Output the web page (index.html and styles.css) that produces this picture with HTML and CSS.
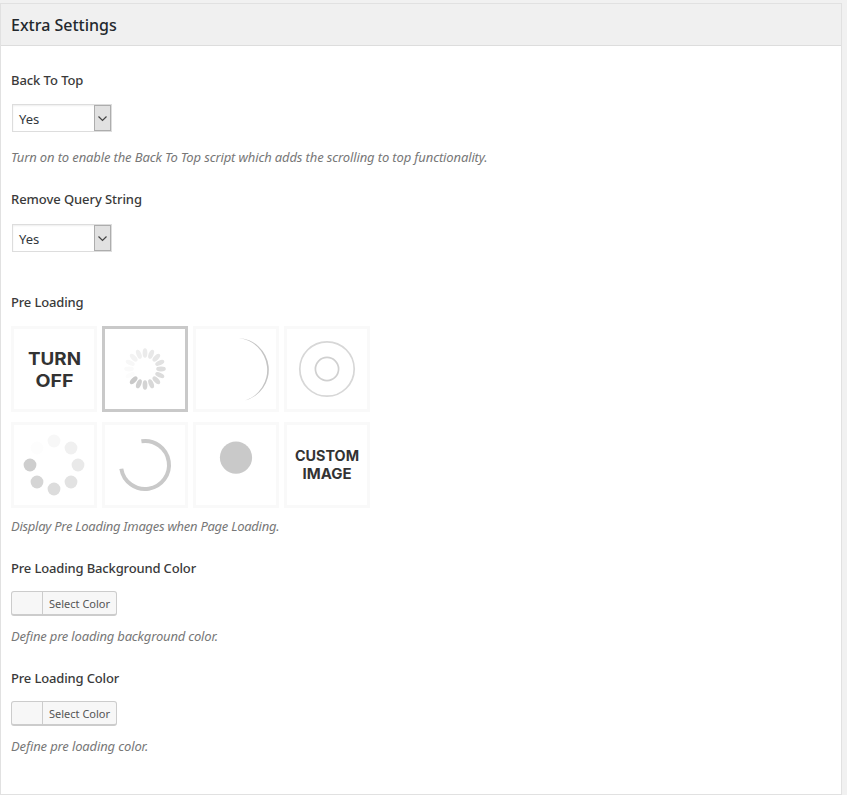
FILE: index.html
```
<!DOCTYPE html>
<html lang="en">
<head>
<meta charset="utf-8">
<title>Extra Settings</title>
<link rel="stylesheet" href="styles.css">
</head>
<body>
<section class="panel">
  <h2 class="panel-title"><span>Extra Settings</span></h2>
  <div class="panel-body">
    <div class="field back-top">
      <div class="label"><span>Back To Top</span></div>
      <div class="select"><span>Yes</span><i><svg width="15" height="25" viewBox="0 0 15 25"><path d="M3.5 10.5l4 4 4-4"/></svg></i></div>
      <p class="desc d1"><span>Turn on to enable the Back To Top script which adds the scrolling to top functionality.</span></p>
    </div>
    <div class="field query">
      <div class="label l2"><span>Remove Query String</span></div>
      <div class="select"><span>Yes</span><i><svg width="15" height="25" viewBox="0 0 15 25"><path d="M3.5 10.5l4 4 4-4"/></svg></i></div>
    </div>
    <div class="field loading">
      <div class="label l3"><span>Pre Loading</span></div>
      <div class="tiles">
        <div class="tile"><svg viewBox="0 0 80 80"><g class="caption big"><text x="14" y="35.7" textLength="53" lengthAdjust="spacingAndGlyphs">TURN</text><text x="21.5" y="57.7" textLength="38" lengthAdjust="spacingAndGlyphs">OFF</text></g></svg></div>
        <div class="tile selected"><svg viewBox="0 0 80 80">
          <defs><ellipse id="petal" cx="40" cy="24" rx="2.4" ry="4.8"/></defs>
          <g>
            <use href="#petal" fill="#ebebeb"/>
            <use href="#petal" fill="#e8e8e8" transform="rotate(22.5 40 40)"/>
            <use href="#petal" fill="#e6e6e6" transform="rotate(45 40 40)"/>
            <use href="#petal" fill="#e2e2e2" transform="rotate(67.5 40 40)"/>
            <use href="#petal" fill="#dedede" transform="rotate(90 40 40)"/>
            <use href="#petal" fill="#dcdcdc" transform="rotate(112.5 40 40)"/>
            <use href="#petal" fill="#dadada" transform="rotate(135 40 40)"/>
            <use href="#petal" fill="#d8d8d8" transform="rotate(157.5 40 40)"/>
            <use href="#petal" fill="#d4d4d4" transform="rotate(180 40 40)"/>
            <use href="#petal" fill="#d0d0d0" transform="rotate(202.5 40 40)"/>
            <use href="#petal" fill="#c9c9c9" transform="rotate(225 40 40)"/>
            <use href="#petal" fill="#fcfcfc" transform="rotate(247.5 40 40)"/>
            <use href="#petal" fill="#fafafa" transform="rotate(270 40 40)"/>
            <use href="#petal" fill="#f7f7f7" transform="rotate(292.5 40 40)"/>
            <use href="#petal" fill="#f3f3f3" transform="rotate(315 40 40)"/>
            <use href="#petal" fill="#efefef" transform="rotate(337.5 40 40)"/>
          </g></svg></div>
        <div class="tile"><svg viewBox="0 0 80 80"><path fill="#c4c4c4" d="M42 9A31.76 31.76 0 0 1 49 71.5A32.1 32.1 0 0 0 42 9Z"/></svg></div>
        <div class="tile"><svg viewBox="0 0 80 80" fill="none" stroke-width="1.7"><circle cx="40" cy="40" r="27.2" stroke="#d7d7d7"/><circle cx="40" cy="40" r="11.6" stroke="#d0d0d0"/></svg></div>
        <div class="tile"><svg viewBox="0 0 80 80">
          <circle cx="40" cy="16" r="6.4" fill="#f7f7f7"/><circle cx="57" cy="23" r="6.4" fill="#f0f0f0"/><circle cx="64" cy="40" r="6.4" fill="#e9e9e9"/><circle cx="57" cy="57" r="6.4" fill="#e2e2e2"/><circle cx="40" cy="64" r="6.4" fill="#dcdcdc"/><circle cx="23" cy="57" r="6.4" fill="#d5d5d5"/><circle cx="16" cy="40" r="6.4" fill="#cecece"/><circle cx="23" cy="23" r="6.4" fill="#fdfdfd"/></svg></div>
        <div class="tile"><svg viewBox="0 0 80 80"><path fill="none" stroke="#c9c9c9" stroke-width="4" d="M36.4 16.3A24 24 0 1 1 16.3 43.8"/></svg></div>
        <div class="tile"><svg viewBox="0 0 80 80"><circle cx="40" cy="32.6" r="16.1" fill="#c9c9c9"/></svg></div>
        <div class="tile"><svg viewBox="0 0 80 80"><g class="caption small"><text x="8" y="36" textLength="64" lengthAdjust="spacingAndGlyphs">CUSTOM</text><text x="15.5" y="54" textLength="49" lengthAdjust="spacingAndGlyphs">IMAGE</text></g></svg></div>
      </div>
      <p class="desc d2"><span>Display Pre Loading Images when Page Loading.</span></p>
    </div>
    <div class="field color">
      <div class="label l4"><span>Pre Loading Background Color</span></div>
      <div class="picker"><i></i><span>Select Color</span></div>
      <p class="desc d3"><span>Define pre loading background color.</span></p>
    </div>
    <div class="field color">
      <div class="label l5"><span>Pre Loading Color</span></div>
      <div class="picker"><i></i><span>Select Color</span></div>
      <p class="desc d4"><span>Define pre loading color.</span></p>
    </div>
  </div>
</section>
</body>
</html>
```
FILE: styles.css
```
* { box-sizing: border-box; }
body {
  margin: 0;
  padding-top: 3px;
  height: 795px;
  overflow: hidden;
  background: #f1f1f1;
  font-family: "Noto Sans", sans-serif;
  font-size: 13px;
  color: #444;
}
.panel {
  width: 842px;
  height: 792px;
  background: #fff;
  border: 1px solid #e1e1e1;
}
.panel-title {
  margin: 0;
  height: 42px;
  padding-left: 10px;
  background: #f0f0f0;
  border-bottom: 1px solid #ddd;
  font-size: 16px;
  font-weight: 500;
  line-height: 42px;
  color: #23282d;
}
.panel-body { padding: 24px 10px 0; }
.label {
  height: 20px;
  line-height: 20px;
  font-weight: 500;
  font-size: 13px;
  color: #3a3a3a;
  letter-spacing: -0.07px;
}
.l3, .l4, .l5 { letter-spacing: -0.15px; }
.select {
  display: flex;
  width: 100px;
  height: 28px;
  margin: 14px 0 0 1px;
  border: 1px solid #ddd;
  background: #fff;
  box-shadow: inset 0 1px 2px rgba(0, 0, 0, .07);
  font-size: 13px;
  line-height: 28px;
  color: #32373c;
}
.select span { flex: 1; padding: 1px 0 0 6px; line-height: 27px; }
.select i {
  width: 17px;
  height: 26px;
  border: 1px solid #adadad;
  background: #e1e1e1;
}
.select svg { display: block; fill: none; stroke: #444; stroke-width: 1.2; }
.desc {
  margin: 15px 0 0;
  height: 20px;
  line-height: 20px;
  font-size: 13px;
  font-style: italic;
  color: #777;
  white-space: nowrap;
}
.d1, .d4 { letter-spacing: -0.13px; }
.d2 { letter-spacing: -0.27px; }
.d3 { letter-spacing: -0.18px; }
.query { margin-top: 22px; }
.query .select { margin-top: 15px; }
.loading { margin-top: 40px; }
.tiles {
  display: grid;
  grid-template-columns: repeat(4, 86px);
  gap: 10px 5px;
  margin-top: 14px;
}
.tile { height: 86px; border: 3px solid #f9f9f9; }
.tile.selected { border-color: #c9c9c9; }
.tile svg { display: block; width: 80px; height: 80px; }
.caption { font-family: Inter, sans-serif; font-weight: 700; fill: #333; }
.big { font-size: 17.5px; }
.small { font-size: 14px; }
.loading .desc { margin-top: 8px; }
.color { margin-top: 22px; }
.picker {
  display: flex;
  width: 106px;
  height: 25px;
  margin-top: 13px;
  border: 1px solid #ccc;
  border-bottom-width: 2px;
  border-radius: 3px;
  background: #f7f7f7;
  font-size: 11px;
  line-height: 24px;
  color: #555;
}
.picker i { width: 31px; border-right: 1px solid #ccc; }
.picker span { padding-left: 6px; white-space: nowrap; }
.color .desc { margin-top: 10px; }
```
